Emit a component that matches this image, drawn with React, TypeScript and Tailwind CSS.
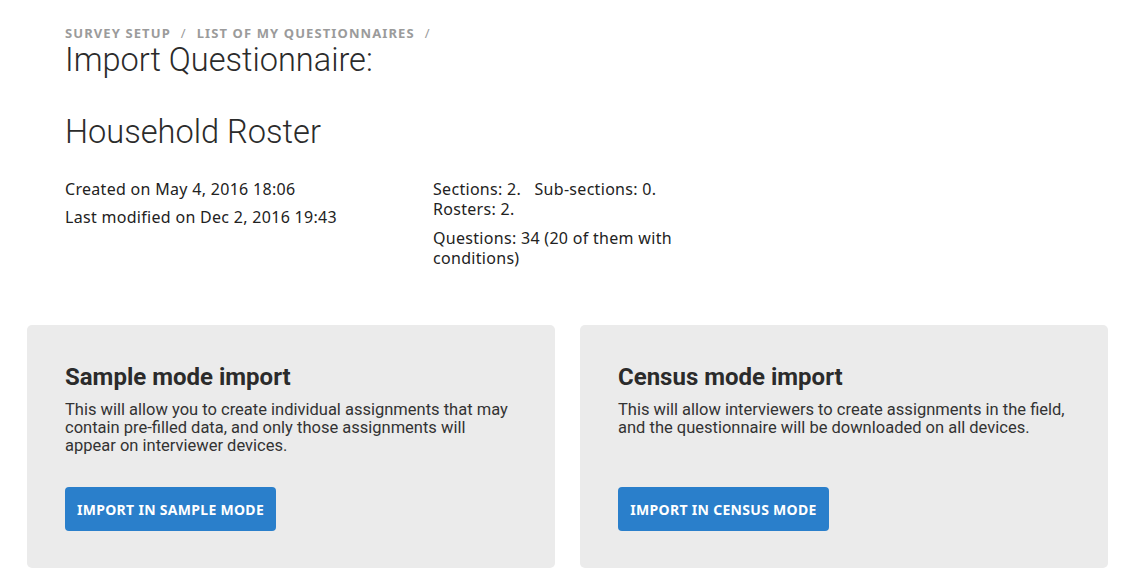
import React from "react";

const meta = "font-['Noto_Sans',sans-serif]";

function Card({ title, text, button }: { title: string; text: string; button: string }) {
  return (
    <div className="flex-1 bg-[#ebebeb] rounded-[5px] px-[38px] pt-[37px] pb-[37px] flex flex-col">
      <h3 className="font-['Roboto',sans-serif] font-bold text-[24px] leading-[30px] text-[#2b2b2b]">{title}</h3>
      <p className="font-['Roboto',sans-serif] text-[16.5px] leading-[18px] text-[#333] mt-[9px] h-[54px]">{text}</p>
      <div className="mt-[32px]">
        <button className={`${meta} bg-[#2a7fcb] text-white font-bold uppercase text-[14px] tracking-[0.3px] rounded-[4px] h-[44px] w-[211px]`}>
          {button}
        </button>
      </div>
    </div>
  );
}

export default function App() {
  return (
    <div className="w-[1130px] h-[585px] bg-white overflow-hidden">
      <div className="pl-[65px] pt-[25px]">
        <div className={`${meta} text-[13px] font-bold tracking-[1.1px] text-[#9b9b9b] uppercase leading-[16px] flex gap-[10px]`}>
          <span>Survey Setup</span>
          <span className="font-normal">/</span>
          <span>List of my questionnaires</span>
          <span className="font-normal">/</span>
        </div>
        <h1 className="font-['Roboto',sans-serif] font-light text-[32.5px] leading-[40px] text-[#2b2b2b] -mt-[1px]">Import Questionnaire:</h1>
        <h2 className="font-['Roboto',sans-serif] font-light text-[32.6px] leading-[40px] text-[#2b2b2b] mt-[32px]">Household Roster</h2>
        <div className={`${meta} text-[16px] tracking-[0.3px] leading-[20px] text-[#222] flex mt-[27px]`}>
          <div className="w-[368px]">
            <p>Created on May 4, 2016 18:06</p>
            <p className="mt-[8px]">Last modified on Dec 2, 2016 19:43</p>
          </div>
          <div className="w-[255px]">
            <p>Sections: 2.&nbsp;&nbsp;&nbsp;Sub-sections: 0. Rosters: 2.</p>
            <p className="mt-[9px]">Questions: 34 (20 of them with conditions)</p>
          </div>
        </div>
      </div>
      <div className="flex gap-[25px] pl-[27px] pr-[22px] mt-[57px]">
        <Card
          title="Sample mode import"
          text="This will allow you to create individual assignments that may contain pre-filled data, and only those assignments will appear on interviewer devices."
          button="Import in sample mode"
        />
        <Card
          title="Census mode import"
          text="This will allow interviewers to create assignments in the field, and the questionnaire will be downloaded on all devices."
          button="Import in census mode"
        />
      </div>
    </div>
  );
}
